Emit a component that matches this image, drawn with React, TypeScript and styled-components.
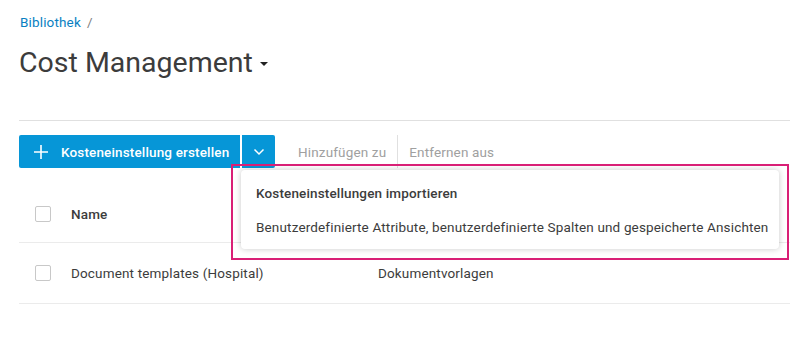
import styled, { createGlobalStyle } from 'styled-components';

const GlobalStyle = createGlobalStyle`
  body {
    margin: 0;
    background: #fff;
    font-family: Roboto, "Noto Sans", sans-serif;
    letter-spacing: 0.15px;
    color: #3c3c3c;
  }
`;

const Page = styled.div`
  padding: 14px 0 0 19px;
  width: 771px;
`;

const Breadcrumb = styled.div`
  font-size: 13.5px;
  line-height: 16px;
  color: #0a7fc2;
  padding-left: 1px;

  span {
    color: #808080;
    margin-left: 6px;
  }
`;

const Title = styled.h1`
  display: flex;
  align-items: center;
  gap: 7px;
  margin: 15px 0 0;
  font-size: 28.5px;
  font-weight: 400;
  line-height: 36px;
  letter-spacing: 0;
  color: #3c3c3c;
`;

const Caret = styled.span`
  width: 0;
  height: 0;
  border-left: 4.5px solid transparent;
  border-right: 4.5px solid transparent;
  border-top: 4.5px solid #222;
  margin-top: 2px;
`;

const Divider = styled.div`
  height: 1px;
  background: #e0e0e0;
  margin-top: 39px;
`;

const Toolbar = styled.div`
  position: relative;
  display: flex;
  align-items: center;
  margin-top: 14px;
  height: 33px;
`;

const PrimaryButton = styled.button`
  display: flex;
  align-items: center;
  gap: 13px;
  height: 33px;
  width: 221px;
  padding: 0 10px 0 15px;
  border: none;
  border-radius: 2px 0 0 2px;
  background: #0696d7;
  color: #fff;
  font-family: inherit;
  font-size: 13.5px;
  letter-spacing: 0.15px;
  font-weight: 500;
  white-space: nowrap;

  svg {
    flex-shrink: 0;
  }
`;

const SplitButton = styled.button`
  display: flex;
  align-items: center;
  justify-content: center;
  width: 33px;
  height: 33px;
  margin-left: 2px;
  border: none;
  border-radius: 0 2px 2px 0;
  background: #0696d7;
`;

const ToolAction = styled.span<{ $divided?: boolean }>`
  display: flex;
  align-items: center;
  height: 33px;
  padding: 0 11px;
  font-size: 13.5px;
  color: #a0a0a0;
  white-space: nowrap;
  border-left: ${(p) => (p.$divided ? '1px solid #e0e0e0' : 'none')};
  margin-left: ${(p) => (p.$divided ? '0' : '12px')};
`;

const Menu = styled.div`
  position: absolute;
  left: 222px;
  top: 35px;
  width: 538px;
  background: #fff;
  border-radius: 4px;
  box-shadow: 0 0 6px rgba(0, 0, 0, 0.22);
  padding: 6px 0 5px;
  z-index: 2;
`;

const MenuItem = styled.div<{ $strong?: boolean }>`
  height: 34px;
  display: flex;
  align-items: center;
  padding: 0 15px;
  font-size: 13.5px;
  white-space: nowrap;
  color: #3c3c3c;
  font-weight: ${(p) => (p.$strong ? 500 : 400)};
`;

const Highlight = styled.div`
  position: absolute;
  left: 212px;
  top: 29px;
  width: 554px;
  height: 92px;
  border: 2px solid #d91f76;
  z-index: 3;
  pointer-events: none;
`;

const Table = styled.div`
  margin-top: 17px;
`;

const Row = styled.div<{ $head?: boolean }>`
  display: grid;
  grid-template-columns: 52px 307px 1fr;
  align-items: center;
  height: ${(p) => (p.$head ? '57px' : '60px')};
  border-bottom: 1px solid #ebebeb;
  font-size: 13.5px;
  font-weight: ${(p) => (p.$head ? 500 : 400)};
  color: #3c3c3c;
`;

const Checkbox = styled.span`
  width: 14px;
  height: 14px;
  margin-left: 16px;
  border: 1px solid #c8c8c8;
  border-radius: 2px;
  background: #fff;
`;

const PlusIcon = () => (
  <svg width="14" height="14" viewBox="0 0 14 14">
    <path d="M7 0v14M0 7h14" stroke="#fff" strokeWidth="1.6" />
  </svg>
);

const ChevronIcon = () => (
  <svg width="12" height="8" viewBox="0 0 12 8">
    <path d="M1.5 1.5L6 6l4.5-4.5" fill="none" stroke="#fff" strokeWidth="1.5" />
  </svg>
);

export default function App() {
  return (
    <>
      <GlobalStyle />
      <Page>
        <Breadcrumb>
          Bibliothek<span>/</span>
        </Breadcrumb>
        <Title>
          Cost Management
          <Caret />
        </Title>
        <Divider />
        <Toolbar>
          <PrimaryButton>
            <PlusIcon />
            Kosteneinstellung erstellen
          </PrimaryButton>
          <SplitButton>
            <ChevronIcon />
          </SplitButton>
          <ToolAction>Hinzufügen zu</ToolAction>
          <ToolAction $divided>Entfernen aus</ToolAction>
          <Menu>
            <MenuItem $strong>Kosteneinstellungen importieren</MenuItem>
            <MenuItem>
              Benutzerdefinierte Attribute, benutzerdefinierte Spalten und gespeicherte Ansichten
            </MenuItem>
          </Menu>
          <Highlight />
        </Toolbar>
        <Table>
          <Row $head>
            <Checkbox />
            <span>Name</span>
            <span />
          </Row>
          <Row>
            <Checkbox />
            <span>Document templates (Hospital)</span>
            <span>Dokumentvorlagen</span>
          </Row>
        </Table>
      </Page>
    </>
  );
}
